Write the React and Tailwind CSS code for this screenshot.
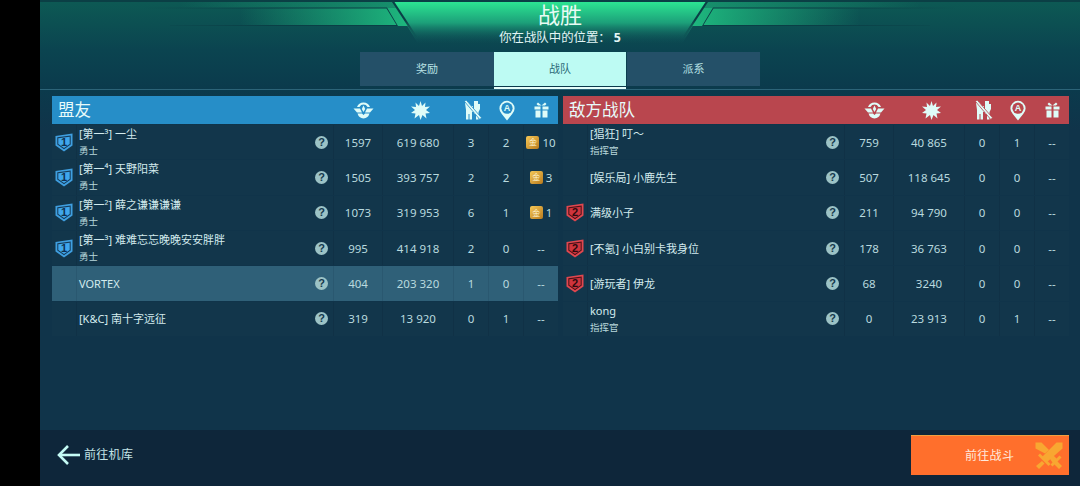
import React from "react";

const cjk = "font-['Noto_Sans','Noto_Sans_CJK_SC',sans-serif]";

const allies = [
  { rank: 1, name: "[第一³] 一尘", sub: "勇士", vals: ["1597", "619 680", "3", "2"], coin: "10" },
  { rank: 1, name: "[第一⁴] 天野阳菜", sub: "勇士", vals: ["1505", "393 757", "2", "2"], coin: "3" },
  { rank: 1, name: "[第一²] 薛之谦谦谦谦", sub: "勇士", vals: ["1073", "319 953", "6", "1"], coin: "1" },
  { rank: 1, name: "[第一³] 难难忘忘晚晚安安胖胖", sub: "勇士", vals: ["995", "414 918", "2", "0"] },
  { name: "VORTEX", vals: ["404", "203 320", "1", "0"], me: true },
  { name: "[K&C] 南十字远征", vals: ["319", "13 920", "0", "1"] },
];

const enemies = [
  { name: "[猖狂] 叮～", sub: "指挥官", vals: ["759", "40 865", "0", "1"] },
  { name: "[娱乐局] 小鹿先生", vals: ["507", "118 645", "0", "0"] },
  { rank: 2, name: "满级小子", vals: ["211", "94 790", "0", "0"] },
  { rank: 2, name: "[不氪] 小白别卡我身位", vals: ["178", "36 763", "0", "0"] },
  { rank: 2, name: "[游玩者] 伊龙", vals: ["68", "3240", "0", "0"] },
  { name: "kong", sub: "指挥官", vals: ["0", "23 913", "0", "1"] },
];

const RankBadge = ({ rank }) => {
  const blue = rank === 1;
  return (
    <svg width="18" height="19" viewBox="0 0 18 19">
      <path d="M0.5 3 L17.5 0.5 V12.5 L9 18.5 L0.5 12.5 Z" fill={blue ? "#3f9fe0" : "#e0474f"} />
      <path d="M2.3 4.3 L15.7 2.6 V11.6 L9 16.2 L2.3 11.6 Z" fill={blue ? "#143a58" : "#4a1218"} />
      <path d="M3.3 5.2 L14.7 3.8 V11 L9 15 L3.3 11 Z" fill={blue ? "#3fa6ec" : "#cf343d"} />
      <text x="9" y="12.6" textAnchor="middle" fontSize="11" fontWeight="700" fill={blue ? "#0f3050" : "#2e0a0e"} fontFamily="Liberation Sans">
        {rank}
      </text>
    </svg>
  );
};

const HelpIcon = () => (
  <div className="flex h-[13px] w-[13px] items-center justify-center rounded-full bg-[#9cc3c6] font-['Liberation_Sans',sans-serif] text-[11px] leading-none font-bold text-[#14384c]">
    ?
  </div>
);

const Coin = () => (
  <div className={`${cjk} flex h-[13px] w-[13px] items-center justify-center rounded-[2px] bg-[linear-gradient(135deg,#f6c957,#b87a1e)] text-[8px] leading-none text-[#fff6d2]`}>
    金
  </div>
);

const MedalIcon = () => (
  <svg width="21" height="17" viewBox="0 0 21 17" fill="#dffcf8">
    <path d="M10.5 0.5 A7 7 0 0 1 17 5 H14.5 A4.5 4.5 0 0 0 6.5 5 H4 A7 7 0 0 1 10.5 0.5 Z" />
    <path d="M10.5 3.5 L12.2 7 L10.5 10 L8.8 7 Z" />
    <path d="M0.5 6.5 H7 L9 10.5 H4 Z" />
    <path d="M20.5 6.5 H14 L12 10.5 H17 Z" />
    <path d="M4.5 11.5 H9 L10.5 13 L12 11.5 H16.5 A7 7 0 0 1 10.5 16.5 A7 7 0 0 1 4.5 11.5 Z" />
  </svg>
);

const BlastIcon = () => (
  <svg width="19" height="19" viewBox="0 0 19 19" fill="#dffcf8">
    <path d="M9.5 0 L11 5 L14.5 1.5 L14 6 L19 5.5 L15 9 L19 12 L14.5 12.5 L15.5 17.5 L11.5 14 L9.5 19 L8 14 L3.5 17.5 L4.5 12.5 L0 12 L4 9 L0 5.5 L5 6 L4.5 1.5 L8 5 Z" />
  </svg>
);

// two figures struck through by a diagonal bar
const NoCaptureIcon = () => (
  <svg width="18" height="20" viewBox="0 0 18 20" fill="#dffcf8">
    <path d="M1 3 L4 2 L6 6 H9 V12 H8 V19.5 H5.5 V14 H4.5 V19.5 H2 V10 Z" />
    <path d="M10 1 H14 V4 H16 V9 L14.5 12 V19.5 H12 V14 H10 Z" />
    <path d="M0.5 1.5 L2.2 0 L17.5 17.8 L15.8 19.5 Z" stroke="currentColor" strokeWidth="0.8" />
  </svg>
);

const PinIcon = () => (
  <svg width="16" height="21" viewBox="0 0 16 21">
    <path d="M8 20.5 L2.8 14 A7.6 7.6 0 1 1 13.2 14 Z" fill="#dffcf8" />
    <circle cx="8" cy="8.2" r="5.6" fill="currentColor" />
    <text x="8" y="11.4" textAnchor="middle" fontSize="9" fontWeight="700" fill="#dffcf8" fontFamily="Liberation Sans">
      A
    </text>
  </svg>
);

const GiftIcon = () => (
  <svg width="15" height="16" viewBox="0 0 15 16" fill="#dffcf8">
    <path d="M4 0.5 L7.5 3.5 L11 0.5 L12.5 2 L11 3.5 H4 L2.5 2 Z" />
    <rect x="0.5" y="4.5" width="6" height="3" />
    <rect x="8.5" y="4.5" width="6" height="3" />
    <rect x="1.5" y="8.5" width="5" height="7" />
    <rect x="8.5" y="8.5" width="5" height="7" />
  </svg>
);

const Row = ({ player }) => {
  const cell = player.me ? "bg-[#2f6078]" : "bg-[#12364b]";
  return (
    <div
      className={`grid flex-1 grid-cols-[24px_256px_48px_70px_34px_34px_34px] gap-px ${
        player.me ? "bg-[#2a5870] shadow-[inset_1px_0_0_#4d8ba3]" : "bg-[#103146]"
      }`}
    >
      <div className={`flex items-center justify-center ${cell}`}>
        {player.rank && <RankBadge rank={player.rank} />}
      </div>
      <div className={`flex items-center justify-between pr-[5px] pl-[2px] ${cell}`}>
        <div className="flex flex-col">
          <span className="text-[11px] leading-[17px] text-[#d3ebee]">{player.name}</span>
          {player.sub && <span className="text-[9.5px] leading-[17px] text-[#b9d8dc]">{player.sub}</span>}
        </div>
        <HelpIcon />
      </div>
      {player.vals.map((v, i) => (
        <div key={i} className={`flex items-center justify-center text-[11.5px] text-[#b9dadf] ${cell}`}>
          {v}
        </div>
      ))}
      <div className={`flex items-center justify-center gap-[3px] text-[11.5px] text-[#b9dadf] ${cell}`}>
        {player.coin ? (
          <>
            <Coin />
            <span>{player.coin}</span>
          </>
        ) : (
          "--"
        )}
      </div>
    </div>
  );
};

const Team = ({ title, barClass, iconText, players }) => (
  <div className="flex w-[506px] flex-col">
    <div className={`flex h-[28px] items-center ${barClass} ${iconText}`}>
      <div className="w-[281px] pl-[6px] text-[16.5px] leading-none text-[#e8fbfa]">{title}</div>
      <div className="flex w-[49px] justify-center pl-[11px]"><MedalIcon /></div>
      <div className="flex w-[71px] justify-center pl-[6px]"><BlastIcon /></div>
      <div className="flex w-[35px] justify-center pl-[4px]"><NoCaptureIcon /></div>
      <div className="flex w-[35px] justify-center pl-[2px]"><PinIcon /></div>
      <div className="flex w-[35px] justify-center pl-[2px]"><GiftIcon /></div>
    </div>
    <div className="mt-px flex h-[211px] flex-col gap-px">
      {players.map((p) => (
        <Row key={p.name} player={p} />
      ))}
    </div>
  </div>
);

const HeaderArt = () => (
  <svg className="absolute top-0 left-0" width="1040" height="56" viewBox="0 0 1040 56">
    <defs>
      <linearGradient id="mid" x1="0" y1="0" x2="0" y2="1">
        <stop offset="0" stopColor="#2ce592" />
        <stop offset="0.5" stopColor="#1c9f79" />
        <stop offset="1" stopColor="#0e5058" stopOpacity="0" />
      </linearGradient>
      <linearGradient id="wingL" x1="0" y1="0" x2="1" y2="0">
        <stop offset="0" stopColor="#1fbd80" stopOpacity="0" />
        <stop offset="1" stopColor="#1fbd80" />
      </linearGradient>
      <linearGradient id="wingR" x1="1" y1="0" x2="0" y2="0">
        <stop offset="0" stopColor="#1fbd80" stopOpacity="0" />
        <stop offset="1" stopColor="#1fbd80" />
      </linearGradient>
      <linearGradient id="lineL" x1="0" y1="0" x2="1" y2="0">
        <stop offset="0" stopColor="#0a3f46" stopOpacity="0" />
        <stop offset="0.5" stopColor="#0a3f46" />
      </linearGradient>
      <linearGradient id="lineR" x1="1" y1="0" x2="0" y2="0">
        <stop offset="0" stopColor="#0a3f46" stopOpacity="0" />
        <stop offset="0.5" stopColor="#0a3f46" />
      </linearGradient>
      <linearGradient id="edge" x1="0" y1="0" x2="0" y2="1">
        <stop offset="0.5" stopColor="#0a3f46" />
        <stop offset="1" stopColor="#0a3f46" stopOpacity="0" />
      </linearGradient>
    </defs>
    <rect width="1040" height="2" fill="#0b3f45" />
    <path d="M353 2 H667 L642 44 H378 Z" fill="url(#mid)" />
    <path d="M140 2 H353 L357 8 H140 Z" fill="url(#wingL)" opacity="0.55" />
    <path d="M200 8 H357 L368 26 H200 Z" fill="url(#wingL)" opacity="0.95" />
    <path d="M880 2 H667 L663 8 H880 Z" fill="url(#wingR)" opacity="0.55" />
    <path d="M820 8 H663 L652 26 H820 Z" fill="url(#wingR)" opacity="0.95" />
    <path d="M100 7.5 H347 L358 26 H130 V25 H356.5 L346.5 8.5 H100 Z" fill="url(#lineL)" />
    <path d="M920 7.5 H673 L662 26 H890 V25 H663.5 L673.5 8.5 H920 Z" fill="url(#lineR)" />
    <path d="M352 2 H354.5 L378 38 H375.5 Z" fill="url(#edge)" />
    <path d="M668 2 H665.5 L642 38 H644.5 Z" fill="url(#edge)" />
  </svg>
);

const App = () => {
  return (
    <div className={`flex h-[486px] w-[1080px] overflow-hidden bg-black ${cjk}`}>
      <div className="relative ml-[40px] flex w-[1040px] flex-col bg-[linear-gradient(to_bottom,#0d5a54_0px,#0b4450_50px,#0b3a4c_90px,#10344a_130px,#10344a_430px)]">
        <HeaderArt />

        {/* title and position */}
        <div className="relative flex h-[52px] flex-col items-center pt-[2px]">
          <div className="text-[22px] leading-[24px] text-[#e8fbf4]">战胜</div>
          <div className="mt-[3px] text-[12.4px] leading-[18px] text-[#e2f5f5]">
            你在战队中的位置：<span className="ml-[3px] font-bold">5</span>
          </div>
        </div>

        {/* tabs */}
        <div className="relative flex h-[38px] justify-center border-b border-[#2c6478]">
          <div className="flex h-[34px] w-[134px] items-center justify-center bg-[#245068] text-[11px] text-[#b9e2e5]">奖励</div>
          <div className="relative flex h-[34px] w-[132px] items-center justify-center bg-[#bdfbf3] text-[11px] text-[#2c6a78]">
            战队
            <div className="absolute top-[35px] left-0 h-[2px] w-full bg-[#e6fffb]" />
          </div>
          <div className="ml-px flex h-[34px] w-[133px] items-center justify-center bg-[#245068] text-[11px] text-[#b9e2e5]">派系</div>
        </div>

        {/* team tables */}
        <div className="flex gap-[5px] px-[12px] pt-[6px]">
          <Team title="盟友" barClass="bg-[#268ec8]" iconText="text-[#268ec8]" players={allies} />
          <Team title="敌方战队" barClass="bg-[#b9464e]" iconText="text-[#b9464e]" players={enemies} />
        </div>

        {/* footer */}
        <div className="mt-auto flex h-[56px] items-start justify-between bg-[#0e263a] pr-[11px] pl-[17px]">
          <div className="mt-[14px] flex items-center gap-[4px]">
            <svg width="23" height="22" viewBox="0 0 23 22" fill="none" stroke="#c4fbf5" strokeWidth="2.6">
              <path d="M23 11 H3" />
              <path d="M11 2 L2 11 L11 20" />
            </svg>
            <span className="text-[12px] tracking-[0.3px] text-[#c3e3e6]">前往机库</span>
          </div>
          <div className="mt-[5px] flex h-[40px] w-[158px] items-center justify-between border-t border-[#f0a040] bg-[#ff6f2c] pr-[6px] pl-[54px]">
            <span className="text-[12px] tracking-[0.3px] text-[#ffe9dc]">前往战斗</span>
            <svg width="28" height="28" viewBox="0 0 28 28" fill="#f8a731">
              <path d="M27.5 0.5 H21.5 L6.5 15.5 L11.5 20.5 L27.5 6.5 Z" />
              <path d="M3 13.5 L5 11.5 L15.5 22 L13.5 24 Z" />
              <path d="M7 19 L9.5 21.5 L4 27 L1 24 Z" />
              <path d="M0.5 0.5 H6.5 L14 8 L10 11.5 L0.5 6.5 Z" />
              <path d="M16.5 11.5 L21.5 16.5 L24.5 13.5 L26.5 15.5 L22.5 19.5 L27 24 L24 27 L19.5 22.5 L17.5 24.5 L15.5 22.5 L17.5 20.5 L14 15.5 Z" />
            </svg>
          </div>
        </div>
      </div>
    </div>
  );
};

export default App;
